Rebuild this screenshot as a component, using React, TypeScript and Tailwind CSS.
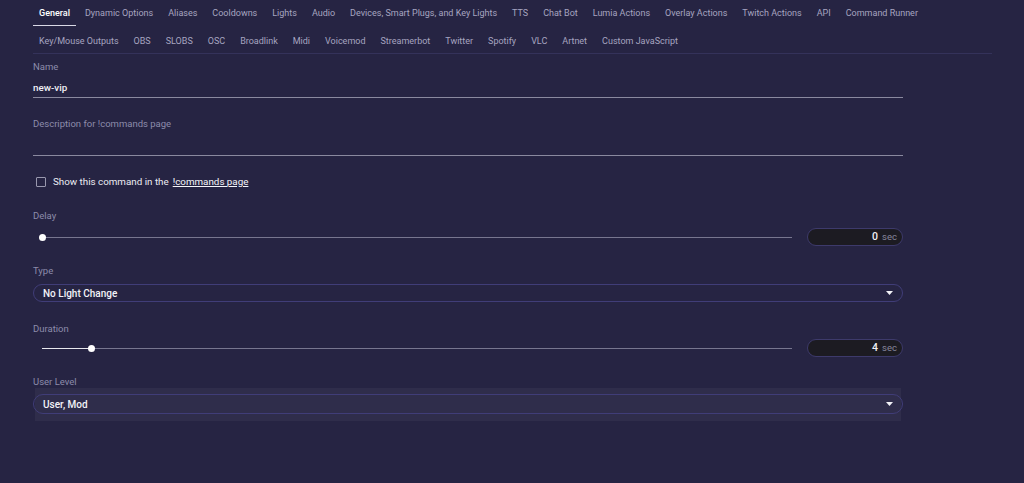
import { useState } from 'react';

const tabs = [
  'General', 'Dynamic Options', 'Aliases', 'Cooldowns', 'Lights', 'Audio',
  'Devices, Smart Plugs, and Key Lights', 'TTS', 'Chat Bot', 'Lumia Actions',
  'Overlay Actions', 'Twitch Actions', 'API', 'Command Runner',
  'Key/Mouse Outputs', 'OBS', 'SLOBS', 'OSC', 'Broadlink', 'Midi', 'Voicemod',
  'Streamerbot', 'Twitter', 'Spotify', 'VLC', 'Artnet', 'Custom JavaScript',
];

function Caret() {
  return (
    <svg width="7" height="4" viewBox="0 0 7 4" className="mr-[9px]">
      <path d="M0 0 L7 0 L3.5 4 Z" fill="#f2f2f7" />
    </svg>
  );
}

function Select({ value, tall }: { value: string; tall?: boolean }) {
  return (
    <div
      className={
        tall
          ? 'flex items-center justify-between h-[20px] rounded-full border border-[#403d78] pl-[9px]'
          : 'flex items-center justify-between h-[18px] rounded-full border border-[#403d78] pl-[9px]'
      }
    >
      <span className="text-[10px] font-medium text-[#f3f3f8]">{value}</span>
      <Caret />
    </div>
  );
}

function SliderRow({ pct, value }: { pct: number; value: string }) {
  return (
    <div className="flex items-center h-[18px]">
      <div className="relative flex-1 ml-[9px] mr-[15px] h-[1px] bg-[#77768f]">
        <div className="absolute left-0 top-0 h-[1px] bg-[#e8e8ee]" style={{ width: `${pct}%` }} />
        <div
          className="absolute top-[-3px] w-[7px] h-[7px] -ml-[3.5px] rounded-full bg-white"
          style={{ left: `${pct}%` }}
        />
      </div>
      <div className="flex items-center justify-end w-[96px] h-[18px] rounded-full bg-[#1c1b22] border border-[#3d3a6b] pr-[5px] gap-[4px]">
        <span className="text-[10.5px] font-medium text-[#f0f0f5]">{value}</span>
        <span className="text-[9.5px] text-[#87869c]">sec</span>
      </div>
    </div>
  );
}

export default function App() {
  const [active] = useState('General');
  return (
    <div className="w-[1024px] h-[483px] bg-[#262443] pl-[33px] overflow-hidden" style={{ fontFamily: 'Roboto, "Liberation Sans", sans-serif' }}>
      <div className="w-[959px] h-[54px] border-b border-[#34325a] flex flex-wrap content-start gap-x-[3px] gap-y-[2px]">
        {tabs.map((t) => (
          <div
            key={t}
            className={
              t === active
                ? 'h-[26px] px-[6px] pt-[2px] flex items-center text-[9px] font-medium text-white border-b-[1.5px] border-[#d9d9e6]'
                : 'h-[26px] px-[6px] pt-[2px] flex items-center text-[9px] text-[#a6a5c0]'
            }
          >
            {t}
          </div>
        ))}
      </div>

      <div className="w-[870px]">
        <div className="mt-[7px] h-[12px] flex items-center text-[9.5px] text-[#8d8cab]">Name</div>
        <div className="h-[25px] flex items-end pb-[3px] border-b border-[#8a899f]">
          <span className="text-[9.8px] font-medium text-[#f1f1f6] leading-[12px]">new-vip</span>
        </div>

        <div className="mt-[20px] h-[12px] flex items-center text-[9.5px] text-[#8d8cab]">Description for !commands page</div>
        <div className="h-[26px] border-b border-[#8a899f]" />

        <div className="mt-[20px] h-[12px] flex items-center">
          <div className="ml-[3px] w-[10px] h-[10px] border-[1.5px] border-[#9998ae] rounded-[1px]" />
          <span className="ml-[7px] text-[9.8px] text-[#ececf3]">Show this command in the</span>
          <span className="ml-[4px] text-[9.8px] text-[#f5f5fa] underline">!commands page</span>
        </div>

        <div className="mt-[22px] h-[12px] flex items-center text-[9.5px] text-[#8d8cab]">Delay</div>
        <div className="mt-[6px]">
          <SliderRow pct={0} value="0" />
        </div>

        <div className="mt-[19px] h-[12px] flex items-center text-[9.5px] text-[#8d8cab]">Type</div>
        <div className="mt-[7px]">
          <Select value="No Light Change" />
        </div>

        <div className="mt-[21px] h-[12px] flex items-center text-[9.5px] text-[#8d8cab]">Duration</div>
        <div className="mt-[4px]">
          <SliderRow pct={6.55} value="4" />
        </div>

        <div className="mt-[20px] h-[11px] flex items-center text-[9.5px] text-[#8d8cab]">User Level</div>
        <div className="mx-[2px] bg-[#2f2d4b] pt-[6px] pb-[7px]">
          <div className="-mx-[2px]">
            <Select value="User, Mod" tall />
          </div>
        </div>
      </div>
    </div>
  );
}
